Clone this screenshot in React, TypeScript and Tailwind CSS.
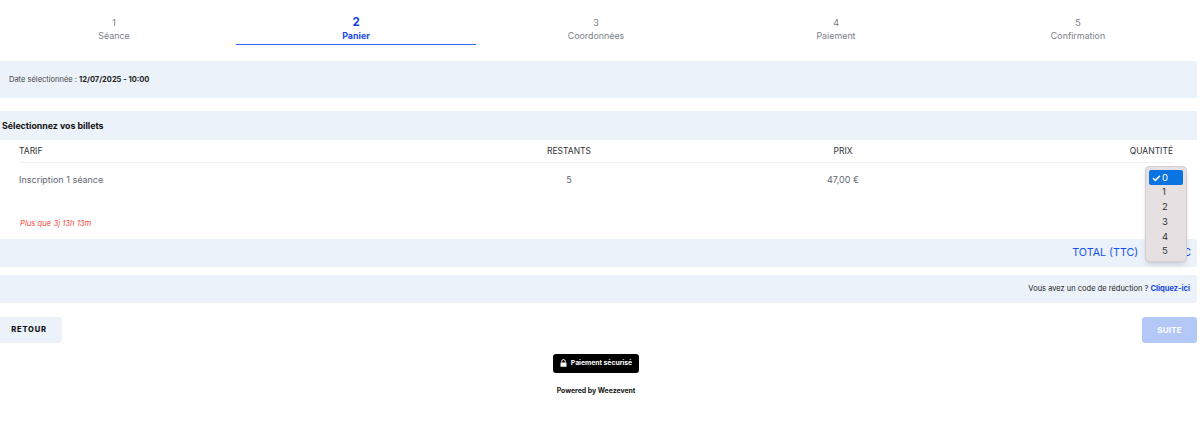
import { Check } from 'lucide-react';

const steps = [
  { num: '1', label: 'Séance', width: 'w-[236px]', pad: 'pr-[8px]' },
  { num: '2', label: 'Panier', width: 'w-[240px]', pad: '', active: true },
  { num: '3', label: 'Coordonnées', width: 'w-[240px]', pad: '' },
  { num: '4', label: 'Paiement', width: 'w-[240px]', pad: '' },
  { num: '5', label: 'Confirmation', width: 'w-[240px]', pad: 'pl-[4px]' },
];

const options = ['1', '2', '3', '4', '5'];

export default function App() {
  return (
    <div className="relative w-[1200px] h-[421px] overflow-hidden bg-white font-['Inter',sans-serif] text-[#111]">
      {/* Steps */}
      <div className="flex pt-[16px] h-[61px]">
        {steps.map((step) => (
          <div key={step.num} className={`${step.width} ${step.pad} h-[29px] text-center ${step.active ? 'border-b border-[#2f62ee] text-[#1447e6] font-bold' : 'text-[#7b8088]'}`}>
            <div className={step.active ? 'text-[11.5px] leading-[13px]' : 'text-[9.5px] leading-[13px]'}>{step.num}</div>
            <div className="text-[8.9px] leading-[13px]">{step.label}</div>
          </div>
        ))}
      </div>

      <div className="w-[1197px]">
        {/* Date */}
        <div className="h-[37px] bg-[#ebf2f9] flex items-center pl-[9px] text-[7.5px] text-[#444]">
          Date sélectionnée :&nbsp;<span className="font-bold text-[#222]">12/07/2025 - 10:00</span>
        </div>

        {/* Billets */}
        <div className="mt-[13px] h-[29px] bg-[#ebf2f9] flex items-center pl-[2px] text-[8.8px] font-bold text-[#111]">
          Sélectionnez vos billets
        </div>

        <div className="pl-[19px] pr-[24px]">
          <div className="grid grid-cols-[400px_300px_248px_1fr] h-[23px] items-center border-b border-[#f0f1f3] text-[8.5px] text-[#333]">
            <div>TARIF</div>
            <div className="text-center">RESTANTS</div>
            <div className="text-center">PRIX</div>
            <div className="text-right">QUANTITÉ</div>
          </div>
          <div className="grid grid-cols-[400px_300px_248px_1fr] h-[34px] items-center text-[9px] text-[#5f6672]">
            <div>Inscription 1 séance</div>
            <div className="text-center">5</div>
            <div className="text-center">47,00 €</div>
            <div />
          </div>
          <div className="mt-[21px] pl-[1px] h-[21px] text-[7.7px] italic text-[#f2503f]">Plus que 3j 13h 13m</div>
        </div>

        {/* Total */}
        <div className="h-[28px] bg-[#ebf2f9] rounded-r-[3px] flex items-center justify-end pr-[6px] text-[10.7px] text-[#1650e8]">
          <span className="mr-[45px]">TOTAL (TTC)</span>
          <span>C</span>
        </div>

        {/* Code */}
        <div className="mt-[8px] h-[28px] bg-[#ebf2f9] rounded-r-[3px] flex items-center justify-end pr-[7px] text-[7.5px] text-[#222]">
          Vous avez un code de réduction ?&nbsp;<span className="font-bold text-[#1447e6]">Cliquez-ici</span>
        </div>

        {/* Buttons */}
        <div className="mt-[14px] flex justify-between">
          <button className="h-[26px] w-[62px] pr-[4px] rounded-r-[3px] bg-[#ebf2f9] text-[7.5px] font-extrabold tracking-[0.8px] text-[#111]">RETOUR</button>
          <button className="h-[26px] w-[55px] rounded-[3px] bg-[#b3c8f7] text-[8px] font-bold tracking-[0.2px] text-white">SUITE</button>
        </div>

        {/* Footer */}
        <div className="mt-[11px] pr-[5px] flex flex-col items-center">
          <div className="h-[19px] w-[86px] rounded-[3px] bg-black flex items-center justify-center gap-[4px] text-[6.8px] font-bold text-white">
            <svg className="h-[8px] w-[7px] mb-[1px]" viewBox="0 0 14 16">
              <path d="M3.5 7V4.5a3.5 3.5 0 0 1 7 0V7" fill="none" stroke="white" strokeWidth="2" />
              <rect x="1" y="7" width="12" height="8.5" rx="1.2" fill="white" />
            </svg>
            Paiement sécurisé
          </div>
          <div className="mt-[13px] text-[6.9px] font-bold text-[#111]">Powered by Weezevent</div>
        </div>
      </div>

      {/* Open select dropdown */}
      <div className="absolute left-[1145px] top-[166px] w-[42px] h-[96px] rounded-[4px] bg-[#e6e0e3] border border-[#d3cfd1] shadow-md px-[3px] pt-[3px] text-[9.5px] text-[#333]">
        <div className="h-[15px] rounded-[2px] bg-[#0b74e0] text-white flex items-center pl-[3px] gap-[1px] pt-[1px]">
          <Check className="h-[9px] w-[9px]" strokeWidth={4} />
          0
        </div>
        {options.map((opt) => (
          <div key={opt} className="h-[14.8px] flex items-center pl-[13px]">{opt}</div>
        ))}
      </div>
    </div>
  );
}
